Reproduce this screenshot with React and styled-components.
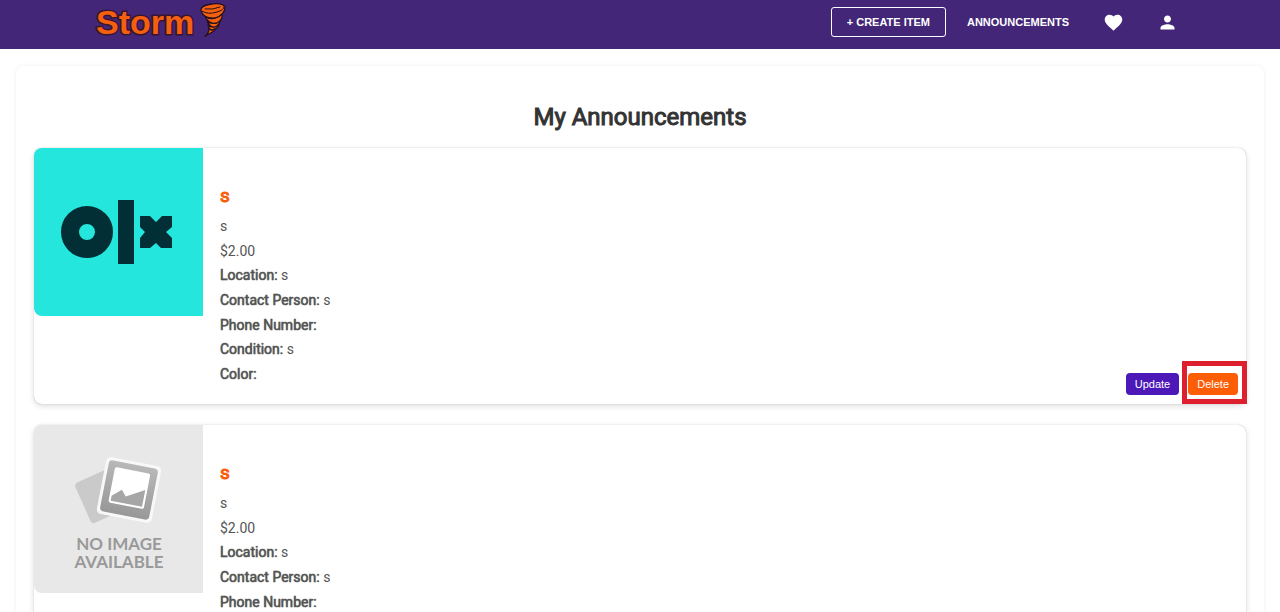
import React from "react";
import styled, { createGlobalStyle } from "styled-components";
import { MdFavorite, MdPerson } from "react-icons/md";

const GlobalStyle = createGlobalStyle`
  *, *::before, *::after { box-sizing: border-box; }
  html { scrollbar-width: none; }
  body {
    margin: 0;
    background: #fff;
    color: #555;
    font-family: Roboto, "Liberation Sans", sans-serif;
    font-size: 14px;
  }
`;

const Header = styled.header`
  display: flex;
  align-items: center;
  justify-content: space-between;
  height: 49px;
  padding: 0 96px;
  background: #432678;
`;

const Brand = styled.a`
  display: flex;
  align-items: center;
  gap: 6px;
  padding-bottom: 10px;
  text-decoration: none;
`;

const BrandName = styled.span`
  padding-top: 4px;
  font: bold 34px/40px "Liberation Sans", Arial, sans-serif;
  color: #f4600f;
  paint-order: stroke fill;
  -webkit-text-stroke: 3px #3a1430;
`;

const Nav = styled.nav`
  display: flex;
  align-items: center;
  gap: 26px;
  padding-bottom: 5px;
`;

const NavGroup = styled.div`
  display: flex;
  align-items: center;
  gap: 20px;
`;

const CreateButton = styled.button`
  height: 30px;
  padding: 0 15px;
  border: 1px solid #fff;
  border-radius: 3px;
  background: transparent;
  color: #fff;
  font: bold 11px/16px "Liberation Sans", Arial, sans-serif;
  cursor: pointer;
`;

const NavLink = styled.a`
  padding: 0 1px;
  color: #fff;
  font: bold 11px/16px "Liberation Sans", Arial, sans-serif;
  text-decoration: none;
`;

const IconButton = styled.button`
  display: flex;
  align-items: center;
  justify-content: center;
  width: 34px;
  height: 34px;
  padding: 0;
  border: 0;
  border-radius: 50%;
  background: transparent;
  color: #fff;
  font-size: 21px;
  cursor: pointer;
`;

const Panel = styled.main`
  margin: 17px 16px;
  padding: 36px 18px 20px;
  border-radius: 8px;
  box-shadow: 0 0 4px rgba(0, 0, 0, 0.07);
`;

const Heading = styled.h1`
  margin: 0 0 16px;
  color: #333;
  font-size: 24px;
  font-weight: 400;
  line-height: 30px;
  text-align: center;
  -webkit-text-stroke: 1px currentColor;
`;

const List = styled.ul`
  display: flex;
  flex-direction: column;
  gap: 21px;
  margin: 0;
  padding: 0;
  list-style: none;
`;

const Card = styled.li`
  display: flex;
  align-items: flex-start;
  min-height: 256px;
  border-radius: 8px;
  background: #fff;
  box-shadow: 0 0 1px rgba(0, 0, 0, 0.3), 0 2px 6px rgba(0, 0, 0, 0.14);
`;

const Picture = styled.svg`
  flex: none;
  width: 169px;
  height: 168px;
  border-radius: 8px 0 0 8px;
`;

const Body = styled.div`
  display: flex;
  flex: 1;
  flex-direction: column;
  align-self: stretch;
  padding: 36px 17px 20px;
`;

const Title = styled.h2`
  margin: 0 0 8px;
  color: #f95d0b;
  font-size: 19px;
  font-weight: 400;
  line-height: 24px;
  -webkit-text-stroke: 1px currentColor;
`;

const Details = styled.div`
  display: flex;
  flex: 1;
  flex-direction: column;
  justify-content: space-between;
`;

const Line = styled.p`
  margin: 0;
  line-height: 20px;
`;

const Label = styled.strong`
  font-weight: 400;
  text-shadow: 0 0 1px currentColor;
  -webkit-text-stroke: thin currentColor;
`;

const Actions = styled.div`
  display: flex;
  align-self: flex-end;
  gap: 9px;
  padding: 0 8px 9px 0;
`;

const ActionButton = styled.button`
  position: relative;
  height: 22px;
  padding: 0 9px;
  border: 0;
  border-radius: 4px;
  background: ${({ $danger }) => ($danger ? "#fd5d05" : "#4c18b8")};
  color: #fff;
  font: 11px/16px "Liberation Sans", Arial, sans-serif;
  cursor: pointer;
`;

const Highlight = styled.span`
  position: absolute;
  inset: -12px -9px -9px -6px;
  border: 5px solid #de1f2e;
  pointer-events: none;
`;

function Tornado() {
  return (
    <svg width="26" height="34" viewBox="0 0 26 34" aria-hidden="true">
      <g fill="#f4600f" stroke="#24101f" strokeWidth="1.3" strokeLinejoin="round">
        <path d="M9 26 L16 24 L14 28 L5 33.300 Q9 30 9 26Z" />
        <path d="M8 22 Q12 26 19 21 Q18 26 12 27 Q9 27 8 22Z" />
        <path d="M7 18 Q12 23 20 16 Q21 21 15 24 Q10 25 7 18Z" />
        <path d="M5 13 Q12 19 22 11 Q23 17 17 20 Q9 22 5 13Z" />
        <path d="M1 8 Q0 3 9 1.500 Q22 -1 25 4 Q25 12 15 15 Q4 16 1 8Z" />
      </g>
      <g fill="none" stroke="#24101f" strokeWidth="1" strokeLinecap="round">
        <path d="M2 8 Q8 12 17 9 Q24 7 24 4" />
        <path d="M5 6 Q13 7 20 4" />
      </g>
    </svg>
  );
}

function OlxPicture() {
  return (
    <Picture viewBox="0 0 169 168" role="img" aria-label="OLX">
      <rect width="169" height="168" fill="#25e6dc" />
      <circle cx="53" cy="84" r="17" fill="none" stroke="#022f36" strokeWidth="18" />
      <rect x="84" y="52" width="16" height="64" fill="#022f36" />
      <path
        fill="#022f36"
        d="M106 68H116L122 74L128 68H138V79L132 84L138 90V100H127L122 95L116 100H106V90L111 84L106 79Z"
      />
    </Picture>
  );
}

function EmptyPicture() {
  return (
    <Picture viewBox="0 0 169 168" role="img" aria-label="No image available">
      <defs>
        <linearGradient id="frame" x1="0" y1="0" x2="0" y2="1">
          <stop offset="0" stopColor="#b8b8b8" />
          <stop offset="1" stopColor="#989898" />
        </linearGradient>
      </defs>
      <rect width="169" height="168" fill="#e8e8e8" />
      <rect x="-22" y="-22" width="44" height="44" rx="4" fill="#cacaca" transform="translate(69 70) rotate(-24)" />
      <g transform="translate(95 65) rotate(11)">
        <rect x="-28" y="-29" width="56" height="58" rx="5" fill="#f8f8f8" />
        <rect x="-25" y="-26" width="50" height="52" rx="4" fill="url(#frame)" />
        <rect x="-18" y="-20" width="36" height="36" rx="2" fill="#fff" />
        <path d="M-16 14V9L-7 1L-2 7L16 -3V14Z" fill="#a6a6a6" />
      </g>
      <g fill="#999" fontFamily="Lato, sans-serif" fontWeight="bold" fontSize="17" textAnchor="middle">
        <text x="85" y="125">NO IMAGE</text>
        <text x="85" y="143">AVAILABLE</text>
      </g>
    </Picture>
  );
}

const announcements = [
  { id: 1, picture: OlxPicture, highlighted: true },
  { id: 2, picture: EmptyPicture, highlighted: false },
];

const fields = [
  ["Location", "s"],
  ["Contact Person", "s"],
  ["Phone Number", ""],
  ["Condition", "s"],
  ["Color", ""],
];

function Announcement({ picture: Image, highlighted }) {
  return (
    <Card>
      <Image />
      <Body>
        <Title>s</Title>
        <Details>
          <Line>s</Line>
          <Line>$2.00</Line>
          {fields.map(([label, value]) => (
            <Line key={label}>
              <Label>{label}:</Label> {value}
            </Line>
          ))}
        </Details>
      </Body>
      <Actions>
        <ActionButton type="button">Update</ActionButton>
        <ActionButton type="button" $danger>
          Delete
          {highlighted && <Highlight />}
        </ActionButton>
      </Actions>
    </Card>
  );
}

export default function App() {
  return (
    <>
      <GlobalStyle />
      <Header>
        <Brand href="#home">
          <BrandName>Storm</BrandName>
          <Tornado />
        </Brand>
        <Nav>
          <NavGroup>
            <CreateButton type="button">+ CREATE ITEM</CreateButton>
            <NavLink href="#announcements">ANNOUNCEMENTS</NavLink>
          </NavGroup>
          <NavGroup>
            <IconButton type="button" aria-label="Favorites">
              <MdFavorite />
            </IconButton>
            <IconButton type="button" aria-label="Profile">
              <MdPerson />
            </IconButton>
          </NavGroup>
        </Nav>
      </Header>
      <Panel>
        <Heading>My Announcements</Heading>
        <List>
          {announcements.map((item) => (
            <Announcement key={item.id} {...item} />
          ))}
        </List>
      </Panel>
    </>
  );
}
